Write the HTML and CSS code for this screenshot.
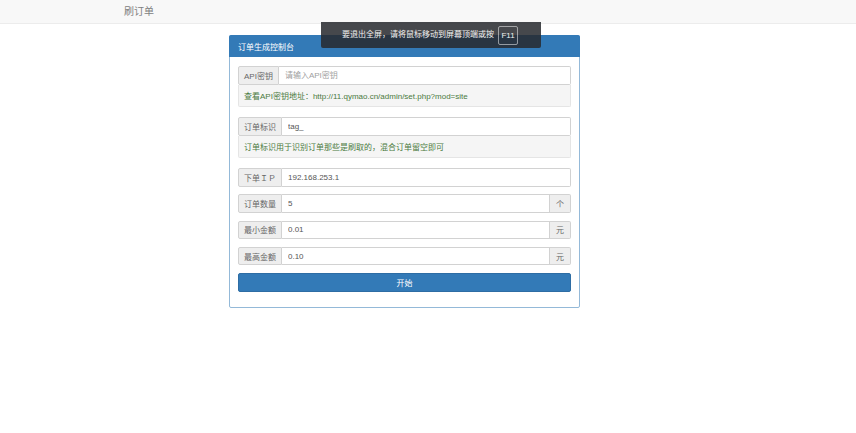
FILE: index.html
```html
<!DOCTYPE html>
<html lang="zh-CN">
<head>
<meta charset="utf-8">
<title>刷订单</title>
<link rel="stylesheet" href="styles.css">
</head>
<body>
<nav class="navbar"><span class="brand">刷订单</span></nav>
<div class="toast"><span class="toast-text">要退出全屏，请将鼠标移动到屏幕顶端或按</span><span class="key">F11</span></div>
<main class="container">
  <section class="panel">
    <div class="panel-heading">订单生成控制台</div>
    <div class="panel-body">
      <div class="input-group">
        <span class="addon">API密钥</span>
        <input class="field" type="text" placeholder="请输入API密钥">
      </div>
      <div class="well">查看API密钥地址：http://11.qymao.cn/admin/set.php?mod=site</div>

      <div class="input-group">
        <span class="addon">订单标识</span>
        <input class="field" type="text" value="tag_">
      </div>
      <div class="well">订单标识用于识别订单那些是刷取的，混合订单留空即可</div>

      <div class="input-group row">
        <span class="addon">下单ＩＰ</span>
        <input class="field" type="text" value="192.168.253.1">
      </div>
      <div class="input-group row">
        <span class="addon">订单数量</span>
        <input class="field" type="text" value="5">
        <span class="addon addon-right">个</span>
      </div>
      <div class="input-group row">
        <span class="addon">最小金额</span>
        <input class="field" type="text" value="0.01">
        <span class="addon addon-right">元</span>
      </div>
      <div class="input-group row">
        <span class="addon">最高金额</span>
        <input class="field" type="text" value="0.10">
        <span class="addon addon-right">元</span>
      </div>
      <button class="btn" type="button">开始</button>
    </div>
  </section>
</main>
</body>
</html>
```
FILE: styles.css
```css
* { box-sizing: border-box; }
html, body { margin: 0; padding: 0; background: #fff; }
body {
  font-family: "Liberation Sans", "Noto Sans CJK SC", sans-serif;
  font-size: 8px;
  color: #333;
}
.navbar {
  height: 24px;
  background: #f8f8f8;
  border-bottom: 1px solid #ececec;
  padding-left: 124px;
  display: flex;
  align-items: center;
}
.brand {
  font-size: 10px;
  color: #808080;
  line-height: 1;
}
.toast {
  position: absolute;
  left: 321px;
  top: 22px;
  width: 220px;
  height: 26px;
  background: rgba(40, 42, 46, 0.86);
  color: #f0f0f0;
  display: flex;
  align-items: center;
  padding-left: 21px;
  border-radius: 0 0 2px 2px;
}
.toast-text { font-size: 8px; line-height: 1; }
.key {
  margin-left: 4px;
  width: 20px;
  height: 19px;
  border: 1px solid rgba(255, 255, 255, 0.5);
  border-radius: 2px;
  display: flex;
  align-items: center;
  justify-content: center;
  font-size: 8px;
}
.container {
  padding-top: 11px;
  padding-left: 229px;
}
.panel {
  width: 351px;
  border: 1px solid #94b9d8;
  border-radius: 2px;
  background: #fff;
}
.panel-heading {
  height: 22px;
  margin: -1px -1px 0;
  background: #337ab7;
  color: #fff;
  display: flex;
  align-items: center;
  padding-left: 9px;
  border-radius: 2px 2px 0 0;
}
.panel-body {
  padding: 9px 8px 8px;
}
.input-group {
  display: flex;
  height: 18.5px;
}
.row { margin-bottom: 7.8px; }
.addon {
  flex: none;
  display: flex;
  align-items: center;
  justify-content: center;
  padding: 0 5px;
  background: #eeeeee;
  border: 1px solid #d2d2d2;
  color: #666;
  border-radius: 2px 0 0 2px;
}
.addon-right {
  width: 21px;
  padding: 0;
  background: #eeeeee;
  border-radius: 0 2px 2px 0;
  border-left: 0;
}
.field {
  flex: 1;
  min-width: 0;
  height: 100%;
  margin: 0;
  border: 1px solid #d2d2d2;
  border-left: 0;
  padding: 0 6px;
  font: inherit;
  font-size: 8px;
  color: #555;
  background: #fff;
  outline: none;
}
.input-group .field:last-child { border-radius: 0 2px 2px 0; }
.field::placeholder { color: #a0a0a0; opacity: 1; }
.well {
  height: 22px;
  background: #f5f5f5;
  border: 1px solid #e5e5e5;
  border-top: 0;
  color: #4a7a40;
  display: flex;
  align-items: center;
  padding-left: 5px;
  margin-bottom: 10.5px;
  border-radius: 0 0 2px 2px;
}
.btn {
  display: block;
  width: 100%;
  height: 18.5px;
  margin: 0.5px 0 7px;
  background: #337ab7;
  border: 1px solid #2e6da4;
  border-radius: 2px;
  color: #fff;
  font: inherit;
  font-size: 8px;
  padding: 0;
}
```
